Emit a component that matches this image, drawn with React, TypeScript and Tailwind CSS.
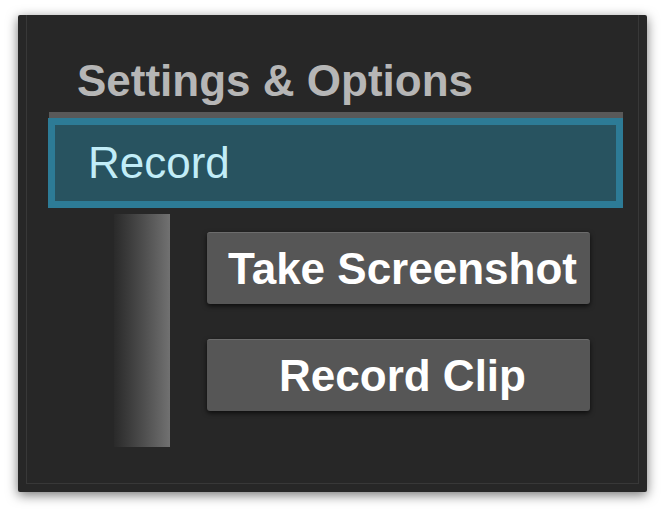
import React from 'react';

const font = { fontFamily: '"Liberation Sans", Arial, sans-serif' };

const ActionButton: React.FC<{ label: string }> = ({ label }) => (
  <button className="h-[72px] w-[383px] flex items-center justify-center pl-2 bg-[#565656] border-t border-[#6c6c6c] rounded-[3px] shadow-[0_2px_5px_rgba(0,0,0,0.7)] text-white font-bold text-[44px] leading-[44px]">
    {label}
  </button>
);

export default function App() {
  return (
    <div className="w-[668px] h-[513px] bg-white pt-[15px] pl-[18px]" style={font}>
      <div className="relative w-[629px] h-[477px] bg-[#272727] rounded-[2px] shadow-[0_3px_12px_rgba(0,0,0,0.55)] pl-[30px] pr-[24px] pt-[44px]">
        {/* inner frame line */}
        <div className="absolute left-[8px] right-[8px] top-0 bottom-[8px] border-x border-b border-[#383838] pointer-events-none" />

        <h1 className="relative pl-[29px] text-[44px] leading-[44px] font-bold text-[#b6b6b6]">
          Settings &amp; Options
        </h1>

        <div className="relative mt-[9px] ml-px h-[6px] bg-[#595959]" />
        <div className="relative border-[7px] border-[#2d7b96] bg-[#285360] pl-[33px] py-4">
          <span className="block text-[44px] leading-[44px] text-[#c2edf8]">Record</span>
        </div>

        <div className="relative flex mt-[6px] ml-[66px]">
          <div className="w-[56px] h-[233px] bg-linear-to-r from-[#2a2a2a] to-[#717171]" />
          <div className="ml-[37px] mt-[18px] flex flex-col gap-[35px]">
            <ActionButton label="Take Screenshot" />
            <ActionButton label="Record Clip" />
          </div>
        </div>
      </div>
    </div>
  );
}
